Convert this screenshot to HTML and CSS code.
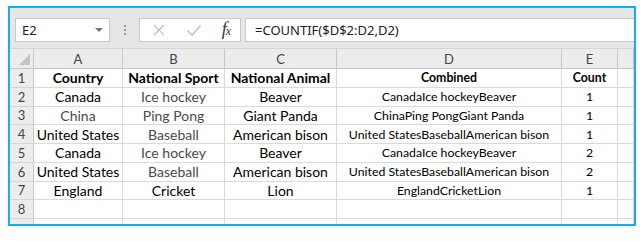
FILE: index.html
```html
<!DOCTYPE html>
<html lang="en">

<head>
    <meta charset="UTF-8">
    <title>COUNTIF</title>
    <link rel="stylesheet" href="styles.css">
</head>

<body>
    <div class="frame">
        <!-- 名称框和编辑栏 -->
        <div class="toolbar">
            <div class="name-box">
                <span>E2</span>
                <span class="arrow"></span>
            </div>
            <div class="dots"><i></i><i></i><i></i></div>
            <div class="fx-box">
                <svg width="14" height="14" viewBox="0 0 14 14">
                    <path d="M2 2 L12 12 M12 2 L2 12" stroke="#c4c4c4" stroke-width="1.4" fill="none"/>
                </svg>
                <svg width="16" height="14" viewBox="0 0 16 14">
                    <path d="M1.5 7.5 L6 12 L14.5 2.5" stroke="#c4c4c4" stroke-width="1.6" fill="none"/>
                </svg>
                <span class="fx">f<sub>x</sub></span>
            </div>
            <div class="formula">=COUNTIF($D$2:D2,D2)</div>
        </div>

        <div class="sheet">
            <div class="corner"><span class="tri"></span></div>
            <div class="col-head">A</div>
            <div class="col-head">B</div>
            <div class="col-head">C</div>
            <div class="col-head">D</div>
            <div class="col-head">E</div>
            <div class="col-head"></div>

            <div class="row-head">1</div>
            <div class="cell bold">Country</div>
            <div class="cell bold">National Sport</div>
            <div class="cell bold">National Animal</div>
            <div class="cell bold small">Combined</div>
            <div class="cell bold small">Count</div>
            <div class="cell"></div>

            <div class="row-head">2</div>
            <div class="cell">Canada</div>
            <div class="cell grey">Ice hockey</div>
            <div class="cell">Beaver</div>
            <div class="cell small">CanadaIce hockeyBeaver</div>
            <div class="cell small">1</div>
            <div class="cell"></div>

            <div class="row-head">3</div>
            <div class="cell grey">China</div>
            <div class="cell grey">Ping Pong</div>
            <div class="cell">Giant Panda</div>
            <div class="cell small">ChinaPing PongGiant Panda</div>
            <div class="cell small">1</div>
            <div class="cell"></div>

            <div class="row-head">4</div>
            <div class="cell">United States</div>
            <div class="cell grey">Baseball</div>
            <div class="cell">American bison</div>
            <div class="cell small">United StatesBaseballAmerican bison</div>
            <div class="cell small">1</div>
            <div class="cell"></div>

            <div class="row-head">5</div>
            <div class="cell">Canada</div>
            <div class="cell grey">Ice hockey</div>
            <div class="cell">Beaver</div>
            <div class="cell small">CanadaIce hockeyBeaver</div>
            <div class="cell small">2</div>
            <div class="cell"></div>

            <div class="row-head">6</div>
            <div class="cell">United States</div>
            <div class="cell grey">Baseball</div>
            <div class="cell">American bison</div>
            <div class="cell small">United StatesBaseballAmerican bison</div>
            <div class="cell small">2</div>
            <div class="cell"></div>

            <div class="row-head">7</div>
            <div class="cell">England</div>
            <div class="cell">Cricket</div>
            <div class="cell">Lion</div>
            <div class="cell small">EnglandCricketLion</div>
            <div class="cell small">1</div>
            <div class="cell"></div>

            <div class="row-head">8</div>
            <div class="cell"></div>
            <div class="cell"></div>
            <div class="cell"></div>
            <div class="cell"></div>
            <div class="cell"></div>
            <div class="cell"></div>

            <div class="row-head"></div>
            <div class="cell"></div>
            <div class="cell"></div>
            <div class="cell"></div>
            <div class="cell"></div>
            <div class="cell"></div>
            <div class="cell"></div>
        </div>
    </div>
</body>

</html>
```

FILE: styles.css
```css
body {
    margin: 0;
    background-color: #fff;
    font-family: Lato, "Open Sans", sans-serif;
}

* {
    box-sizing: border-box;
}

.frame {
    margin: 6px 0 0 8px;
    width: 628px;
    height: 220px;
    border: 2px solid #12aff0;
    background-color: #e6e6e6;
    overflow: hidden;
}

/* 编辑栏 */
.toolbar {
    height: 40px;
    display: flex;
    align-items: flex-start;
    padding: 10px 0 0 5px;
    font-family: "Noto Sans", sans-serif;
    color: #222;
}

.name-box {
    width: 95px;
    height: 24px;
    background-color: #fff;
    border: 1px solid #c9c9c9;
    display: flex;
    align-items: center;
    justify-content: space-between;
    padding: 0 6px 0 6px;
    font-size: 13px;
}

.arrow {
    width: 0;
    height: 0;
    border-left: 4px solid transparent;
    border-right: 4px solid transparent;
    border-top: 4px solid #777;
}

.dots {
    width: 29px;
    height: 24px;
    display: flex;
    flex-direction: column;
    align-items: center;
    justify-content: center;
    gap: 2px;
}

.dots i {
    width: 2px;
    height: 2px;
    background-color: #9a9a9a;
}

.fx-box {
    width: 102px;
    height: 24px;
    background-color: #fff;
    border: 1px solid #c9c9c9;
    display: flex;
    align-items: center;
    justify-content: space-between;
    padding: 0 9px 0 12px;
}

.fx {
    font-family: "Liberation Serif", serif;
    font-style: italic;
    font-size: 18px;
    line-height: 18px;
    color: #333;
}

.fx sub {
    font-size: 12px;
    vertical-align: 0;
    margin-left: -1px;
}

.formula {
    flex: 1;
    height: 24px;
    margin-left: 4px;
    background-color: #fff;
    border: 1px solid #c9c9c9;
    border-right: none;
    padding-left: 9px;
    font-size: 13px;
    line-height: 22px;
}

/* 表格 */
.sheet {
    display: grid;
    grid-template-columns: 24px 89px 102px 112px 225px 56px 16px;
    grid-template-rows: 21px repeat(8, 18.75px) 10px;
    background-color: #fff;
}

.corner,
.col-head,
.row-head {
    background-color: #ececec;
    color: #444;
    font-size: 13px;
    display: flex;
    align-items: center;
    justify-content: center;
}

.corner {
    position: relative;
    border-right: 1px solid #c6c6c6;
    border-bottom: 1px solid #c6c6c6;
    border-top: 1px solid #d6d6d6;
}

.tri {
    position: absolute;
    right: 3px;
    bottom: 3px;
    width: 0;
    height: 0;
    border-left: 11px solid transparent;
    border-bottom: 11px solid #c4c4c4;
}

.col-head {
    border-top: 1px solid #d6d6d6;
    border-right: 1px solid #c6c6c6;
    border-bottom: 1px solid #c6c6c6;
}

.row-head {
    border-right: 1px solid #c6c6c6;
    border-bottom: 1px solid #d6d6d6;
}

.cell {
    border-right: 1px solid #dadada;
    border-bottom: 1px solid #dadada;
    display: flex;
    align-items: center;
    justify-content: center;
    font-size: 14px;
    color: #000;
    white-space: nowrap;
    overflow: hidden;
}

.cell.bold {
    font-weight: bold;
}

.cell.small {
    font-size: 12.3px;
}

.cell.grey {
    color: #4a4a4a;
}
```
